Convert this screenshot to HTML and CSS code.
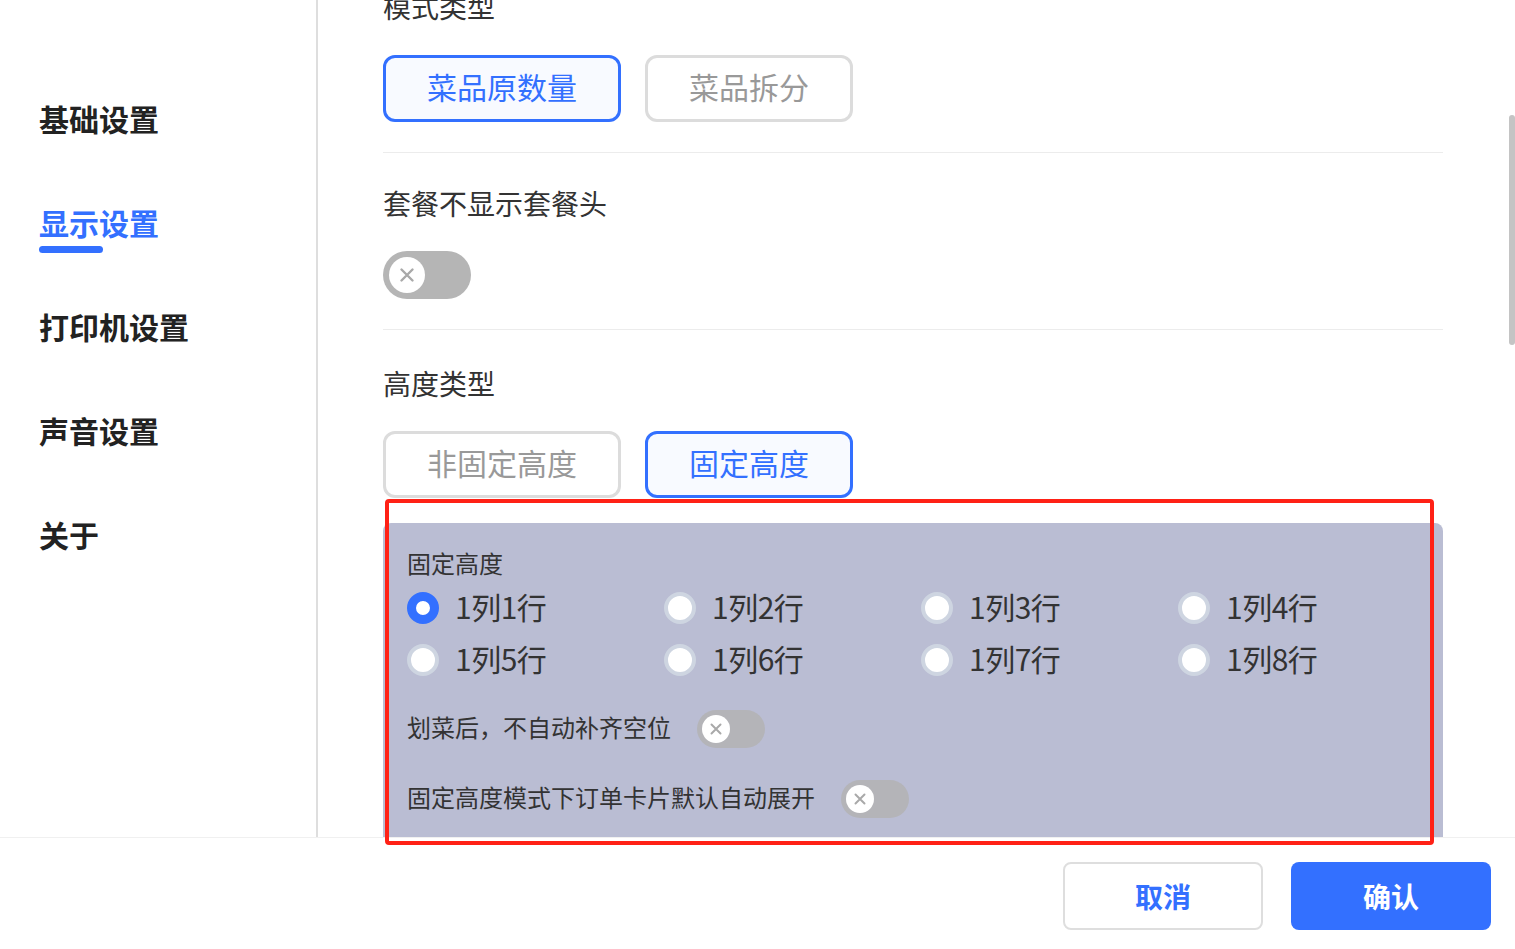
FILE: index.html
```html
<!DOCTYPE html>
<html lang="zh">
<head>
<meta charset="utf-8">
<title>设置</title>
<link rel="stylesheet" href="styles.css">
</head>
<body>
<div class="main">
  <nav class="sidebar">
    <div class="nav-item">基础设置</div>
    <div class="nav-item active">显示设置</div>
    <div class="nav-item">打印机设置</div>
    <div class="nav-item">声音设置</div>
    <div class="nav-item">关于</div>
  </nav>
  <section class="content">
    <div class="inner">
      <div class="label">模式类型</div>
      <div class="seg">
        <div class="opt selected">菜品原数量</div>
        <div class="opt">菜品拆分</div>
      </div>
      <div class="divider"></div>
      <div class="label label-2">套餐不显示套餐头</div>
      <div class="toggle big"><span class="knob"><svg viewBox="0 0 20 20"><path d="M5 5L15 15M15 5L5 15"/></svg></span></div>
      <div class="divider"></div>
      <div class="label label-3">高度类型</div>
      <div class="seg">
        <div class="opt">非固定高度</div>
        <div class="opt selected">固定高度</div>
      </div>
      <div class="panel">
        <div class="panel-title">固定高度</div>
        <div class="radios">
          <div class="radio on"><span class="dot"></span><span class="rtext">1列1行</span></div>
          <div class="radio"><span class="dot"></span><span class="rtext">1列2行</span></div>
          <div class="radio"><span class="dot"></span><span class="rtext">1列3行</span></div>
          <div class="radio"><span class="dot"></span><span class="rtext">1列4行</span></div>
          <div class="radio"><span class="dot"></span><span class="rtext">1列5行</span></div>
          <div class="radio"><span class="dot"></span><span class="rtext">1列6行</span></div>
          <div class="radio"><span class="dot"></span><span class="rtext">1列7行</span></div>
          <div class="radio"><span class="dot"></span><span class="rtext">1列8行</span></div>
        </div>
        <div class="switch-row first"><span class="stext">划菜后，不自动补齐空位</span><div class="toggle small"><span class="knob"><svg viewBox="0 0 20 20"><path d="M5 5L15 15M15 5L5 15"/></svg></span></div></div>
        <div class="switch-row"><span class="stext">固定高度模式下订单卡片默认自动展开</span><div class="toggle small"><span class="knob"><svg viewBox="0 0 20 20"><path d="M5 5L15 15M15 5L5 15"/></svg></span></div></div>
        <div class="panel-rest"></div>
      </div>
    </div>
    <div class="scrollbar"></div>
  </section>
</div>
<footer class="footer">
  <button class="btn cancel">取消</button>
  <button class="btn ok">确认</button>
</footer>
<div class="highlight"></div>
</body>
</html>
```
FILE: styles.css
```css
* { box-sizing: border-box; }
html, body { margin: 0; padding: 0; }
body {
  width: 1515px;
  height: 949px;
  overflow: hidden;
  position: relative;
  background: #fff;
  font-family: "Noto Sans CJK SC", "Noto Sans", sans-serif;
  color: #333;
  display: flex;
  flex-direction: column;
}
.main {
  height: 837px;
  display: flex;
  position: relative;
  overflow: hidden;
}
.sidebar {
  width: 318px;
  flex: none;
  border-right: 2px solid #dedede;
  padding: 98px 0 0 39px;
  display: flex;
  flex-direction: column;
  gap: 64px;
}
.nav-item {
  font-size: 30px;
  line-height: 40px;
  height: 40px;
  font-weight: 700;
  color: #222;
  position: relative;
}
.nav-item.active { color: #3370ff; }
.nav-item.active::after {
  content: "";
  position: absolute;
  left: 0;
  top: 44px;
  width: 64px;
  height: 7px;
  border-radius: 4px;
  background: #3370ff;
}
.content {
  flex: 1;
  padding: 0 72px 0 65px;
  position: relative;
}
.inner {
  margin-top: -14px;
  display: flex;
  flex-direction: column;
  align-items: flex-start;
}
.label {
  font-size: 28px;
  line-height: 40px;
  color: #333;
}
.seg {
  display: flex;
  gap: 24px;
  margin-top: 29px;
}
.opt {
  height: 67px;
  border: 3px solid #dcdcdc;
  border-radius: 12px;
  padding: 0 41px 4px;
  font-size: 30px;
  line-height: 57px;
  color: #999;
  background: #fff;
}
.opt.selected {
  border-color: #3370ff;
  color: #3370ff;
  background: #f8faff;
}
.opt:first-child { width: 238px; text-align: center; padding: 0 0 4px; }
.divider {
  align-self: stretch;
  height: 1px;
  background: #ececec;
  margin-top: 30px;
}
.label-2 { margin-top: 30px; }
.label-3 { margin-top: 33px; }
.label-3 + .seg { margin-top: 28px; }
.toggle {
  background: #b5b5b5;
  border-radius: 999px;
  display: flex;
  align-items: center;
  flex: none;
}
.toggle.big {
  width: 88px;
  height: 48px;
  margin-top: 28px;
  padding-left: 6px;
}
.toggle .knob {
  background: #fff;
  border-radius: 50%;
  display: flex;
  align-items: center;
  justify-content: center;
}
.toggle.big .knob { width: 36px; height: 36px; }
.toggle.big svg { width: 22px; height: 22px; }
.toggle svg path { stroke: #a9a9a9; stroke-width: 2.2; stroke-linecap: round; fill: none; }
.toggle.small {
  width: 68px;
  height: 38px;
  padding-left: 5px;
  margin-left: 26px;
  background: #b4b4b8;
}
.toggle.small .knob { width: 28px; height: 28px; }
.toggle.small svg { width: 18px; height: 18px; }
.panel {
  align-self: stretch;
  margin-top: 25px;
  background: #babdd3;
  border-radius: 8px 8px 0 0;
  padding: 24px 0 0 24px;
}
.panel-title {
  font-size: 24px;
  line-height: 32px;
  color: #333;
}
.radios {
  display: grid;
  grid-template-columns: repeat(4, 257px);
  grid-auto-rows: 52px;
  margin-top: 3px;
}
.radio {
  display: flex;
  align-items: center;
  gap: 16px;
  font-size: 30px;
  color: #333;
}
.rtext {
  line-height: 30px;
  padding-bottom: 5px;
  letter-spacing: -0.5px;
}
.dot {
  width: 32px;
  height: 32px;
  border-radius: 50%;
  background: #fff;
  border: 4px solid #ced5e1;
  flex: none;
}
.radio.on .dot {
  border: 9px solid #3370ff;
}
.switch-row {
  display: flex;
  align-items: center;
  height: 38px;
  font-size: 24px;
  color: #333;
  margin-top: 32px;
}
.switch-row.first { margin-top: 24px; }
.stext {
  line-height: 24px;
  padding-bottom: 5px;
}
.panel-rest { height: 80px; }
.scrollbar {
  position: absolute;
  right: 0;
  top: 115px;
  width: 6px;
  height: 230px;
  border-radius: 3px;
  background: #c4c4c4;
}
.footer {
  height: 112px;
  border-top: 1px solid #f0f0f0;
  display: flex;
  justify-content: flex-end;
  gap: 28px;
  padding: 24px 24px 0 0;
}
.btn {
  width: 200px;
  height: 68px;
  border-radius: 8px;
  font-family: "Noto Sans CJK SC", "Noto Sans", sans-serif;
  font-size: 28px;
  font-weight: 700;
  cursor: pointer;
}
.btn.cancel {
  background: #fff;
  border: 2px solid #dedede;
  color: #3370ff;
}
.btn.ok {
  background: #3370ff;
  border: none;
  color: #fff;
}
.highlight {
  position: absolute;
  left: 385px;
  top: 499px;
  width: 1049px;
  height: 346px;
  border: 4px solid #ff2116;
  border-radius: 4px;
  pointer-events: none;
}
```
